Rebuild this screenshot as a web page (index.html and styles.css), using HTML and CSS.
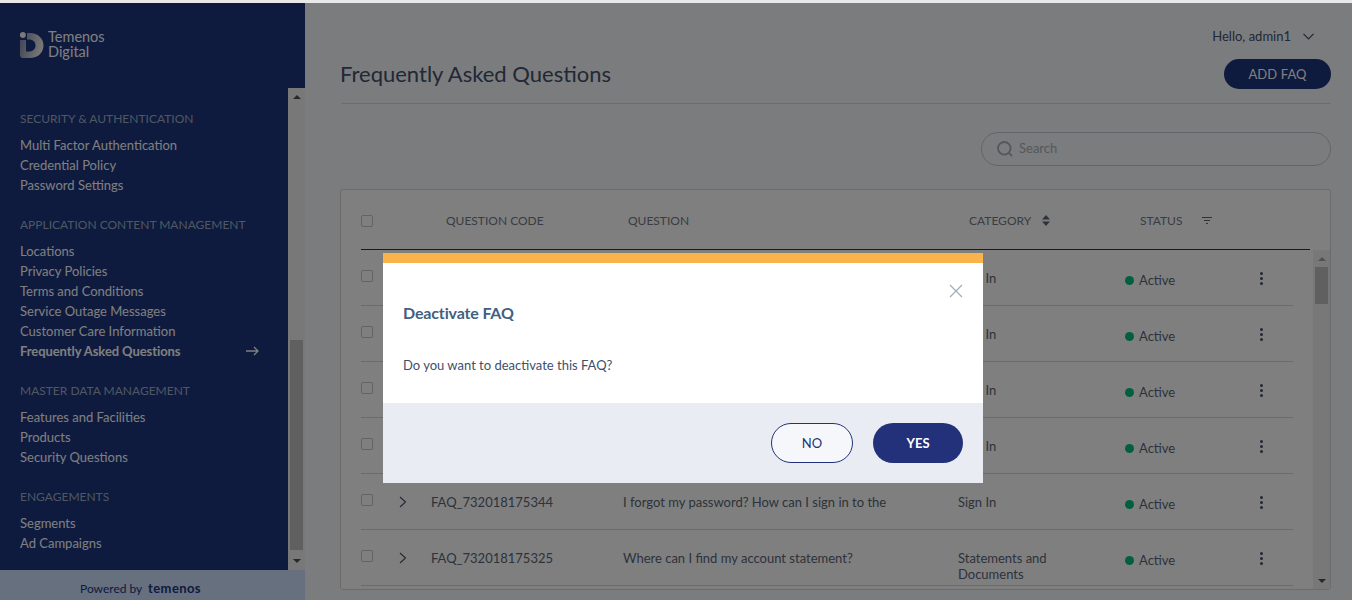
FILE: index.html
```html
<!DOCTYPE html>
<html lang="en">
<head>
<meta charset="UTF-8" />
<title>Frequently Asked Questions</title>
<link rel="stylesheet" href="styles.css">
</head>
<body>

<div class="top-strip"></div>

<div class="shell">
  <!-- Sidebar -->
  <aside class="sidebar">
    <div class="logo">
      <svg class="logo-mark" width="24" height="27" viewBox="0 0 24 27">
        <defs>
          <linearGradient id="logoFade" x1="0" y1="0" x2="1" y2="0.300">
            <stop offset="0" stop-color="#7c86a6" />
            <stop offset="1" stop-color="#eeeeee" />
          </linearGradient>
        </defs>
        <circle cx="2.8" cy="3" r="3" fill="#f4f4f4" />
        <path d="M7 1H10C18 1 23.500 6.500 23.500 13.500C23.500 20.500 18 26 10 26H3C1 26 0 25 0 23V8H6V19.500H9C13 19.500 15.500 17 15.500 13.500C15.500 10 13 7.500 9 7.500H7z" fill="url(#logoFade)" />
      </svg>
      <div class="logo-text">Temenos<br>Digital</div>
    </div>

    <div class="nav-wrap">
      <nav class="nav">
        <h4>Security &amp; Authentication</h4>
        <a>Multi Factor Authentication</a>
        <a>Credential Policy</a>
        <a>Password Settings</a>

        <h4>Application Content Management</h4>
        <a>Locations</a>
        <a>Privacy Policies</a>
        <a>Terms and Conditions</a>
        <a>Service Outage Messages</a>
        <a>Customer Care Information</a>
        <a class="active">Frequently Asked Questions
          <svg width="13" height="10" viewBox="0 0 13 10" fill="none" stroke="#fff" stroke-width="1.300"><path d="M0 5h12M8 1l4 4-4 4" /></svg>
        </a>

        <h4>Master Data Management</h4>
        <a>Features and Facilities</a>
        <a>Products</a>
        <a>Security Questions</a>

        <h4>Engagements</h4>
        <a>Segments</a>
        <a>Ad Campaigns</a>
      </nav>
      <div class="scrollbar side-scroll">
        <span class="arrow-up"></span>
        <span class="thumb"></span>
        <span class="arrow-down"></span>
      </div>
    </div>

    <div class="powered">Powered by <b>temenos</b></div>
  </aside>

  <!-- Contenido -->
  <main class="main">
    <div class="user">
      Hello, admin1
      <svg width="11" height="7" viewBox="0 0 11 7" fill="none" stroke="#44506a" stroke-width="1.200"><path d="M.5.8l5 5 5-5" /></svg>
    </div>

    <div class="title-row">
      <h1>Frequently Asked Questions</h1>
      <button class="btn-add">ADD FAQ</button>
    </div>

    <div class="search">
      <svg width="16" height="16" viewBox="0 0 16 16" fill="none" stroke="#a9b0ba" stroke-width="1.800"><circle cx="7.300" cy="7.300" r="6.300" /><path d="M12 12l3 3" /></svg>
      <span>Search</span>
    </div>

    <section class="card">
      <div class="thead">
        <span class="check"></span>
        <span>QUESTION CODE</span>
        <span>QUESTION</span>
        <span class="with-icon">CATEGORY
          <svg width="8" height="11" viewBox="0 0 8 11" fill="#5d6675"><path d="M4 0l4 4.500H0zM4 11L0 6.500h8z" /></svg>
        </span>
        <span class="with-icon status-head">STATUS
          <svg width="10" height="7" viewBox="0 0 10 7" fill="none" stroke="#5d6675" stroke-width="1"><path d="M0 .5h10M2 3.500h6M4 6.500h2" /></svg>
        </span>
      </div>

      <div class="tbody">
        <div class="rows">
          <div class="row">
            <span class="check"></span>
            <svg class="chev" width="8" height="12" viewBox="0 0 8 12" fill="none" stroke="#44506a" stroke-width="1.100"><path d="M1 1l5.500 5L1 11" /></svg>
            <span>FAQ_732018175401</span>
            <span>How do I sign in to the application?</span>
            <span>Sign In</span>
            <span class="status"><i></i>Active</span>
            <span class="kebab"><i></i><i></i><i></i></span>
          </div>
          <div class="row">
            <span class="check"></span>
            <svg class="chev" width="8" height="12" viewBox="0 0 8 12" fill="none" stroke="#44506a" stroke-width="1.100"><path d="M1 1l5.500 5L1 11" /></svg>
            <span>FAQ_732018175389</span>
            <span>Can I sign in with my fingerprint?</span>
            <span>Sign In</span>
            <span class="status"><i></i>Active</span>
            <span class="kebab"><i></i><i></i><i></i></span>
          </div>
          <div class="row">
            <span class="check"></span>
            <svg class="chev" width="8" height="12" viewBox="0 0 8 12" fill="none" stroke="#44506a" stroke-width="1.100"><path d="M1 1l5.500 5L1 11" /></svg>
            <span>FAQ_732018175372</span>
            <span>Why is my account locked?</span>
            <span>Sign In</span>
            <span class="status"><i></i>Active</span>
            <span class="kebab"><i></i><i></i><i></i></span>
          </div>
          <div class="row">
            <span class="check"></span>
            <svg class="chev" width="8" height="12" viewBox="0 0 8 12" fill="none" stroke="#44506a" stroke-width="1.100"><path d="M1 1l5.500 5L1 11" /></svg>
            <span>FAQ_732018175358</span>
            <span>How do I change my username?</span>
            <span>Sign In</span>
            <span class="status"><i></i>Active</span>
            <span class="kebab"><i></i><i></i><i></i></span>
          </div>
          <div class="row">
            <span class="check"></span>
            <svg class="chev" width="8" height="12" viewBox="0 0 8 12" fill="none" stroke="#44506a" stroke-width="1.100"><path d="M1 1l5.500 5L1 11" /></svg>
            <span>FAQ_732018175344</span>
            <span>I forgot my password? How can I sign in to the</span>
            <span>Sign In</span>
            <span class="status"><i></i>Active</span>
            <span class="kebab"><i></i><i></i><i></i></span>
          </div>
          <div class="row">
            <span class="check"></span>
            <svg class="chev" width="8" height="12" viewBox="0 0 8 12" fill="none" stroke="#44506a" stroke-width="1.100"><path d="M1 1l5.500 5L1 11" /></svg>
            <span>FAQ_732018175325</span>
            <span>Where can I find my account statement?</span>
            <span>Statements and<br>Documents</span>
            <span class="status"><i></i>Active</span>
            <span class="kebab"><i></i><i></i><i></i></span>
          </div>
        </div>
        <div class="scrollbar table-scroll">
          <span class="arrow-up"></span>
          <span class="thumb"></span>
          <span class="arrow-down"></span>
        </div>
      </div>
    </section>
  </main>
</div>

<!-- Modal -->
<div class="overlay">
  <div class="modal" role="dialog" aria-label="Deactivate FAQ">
    <div class="modal-bar"></div>
    <div class="modal-body">
      <svg class="modal-close" width="14" height="14" viewBox="0 0 14 14" fill="none" stroke="#a3aebd" stroke-width="1.300"><path d="M1 1l12 12M13 1L1 13" /></svg>
      <h2>Deactivate FAQ</h2>
      <p>Do you want to deactivate this FAQ?</p>
    </div>
    <div class="modal-foot">
      <button class="btn-no">NO</button>
      <button class="btn-yes">YES</button>
    </div>
  </div>
</div>

</body>
</html>
```

FILE: styles.css
```css
/* Reset */
* {
  margin: 0; padding: 0; box-sizing: border-box;
}
body, html {
  height: 100%;
  background: #f7f8fc;
  font-family: 'Lato', sans-serif;
  color: #44506a;
  overflow: hidden;
}
body {
  position: relative;
}
.top-strip {
  height: 3px;
  background: #e9e9e9;
}
.shell {
  display: flex;
  height: 597px;
}

/* Sidebar */
.sidebar {
  width: 305px;
  flex: none;
  display: flex;
  flex-direction: column;
  background: #1c347c;
}
.logo {
  height: 85px;
  flex: none;
  display: flex;
  padding: 29px 0 0 20px;
}
.logo-mark {
  flex: none;
}
.logo-text {
  margin-left: 4px;
  margin-top: -3px;
  font-size: 14.5px;
  line-height: 15px;
  color: #fff;
}
.nav-wrap {
  flex: 1;
  display: flex;
  min-height: 0;
}
.nav {
  flex: 1;
  padding: 21px 29px 0 20px;
  overflow: hidden;
}
.nav h4 {
  font-size: 12px;
  line-height: 20px;
  font-weight: 400;
  text-transform: uppercase;
  color: #9fb0c4;
  margin: 20px 0 6px;
}
.nav h4:first-child {
  margin-top: 0;
}
.nav a {
  display: flex;
  justify-content: space-between;
  align-items: center;
  font-size: 13px;
  line-height: 20px;
  color: #fff;
}
.nav a.active {
  font-weight: 700;
  letter-spacing: -.08px;
}
.powered {
  height: 30px;
  flex: none;
  padding: 10px 0 0 80px;
  background: #cde0ff;
  font-size: 12px;
  line-height: 16px;
  color: #1c347c;
}
.powered b {
  margin-left: 3px;
  font-size: 13px;
  letter-spacing: .4px;
}

/* Scrollbars */
.scrollbar {
  width: 17px;
  flex: none;
  display: flex;
  flex-direction: column;
  align-items: center;
  background: #f1f1f1;
}
.scrollbar .thumb {
  width: 13px;
  background: #c1c1c1;
}
.arrow-up, .arrow-down {
  width: 0; height: 0;
  border-left: 4px solid transparent;
  border-right: 4px solid transparent;
}
.arrow-up {
  border-bottom: 4px solid #505050;
  margin-top: 7px;
}
.arrow-down {
  border-top: 4px solid #505050;
  margin-top: auto;
  margin-bottom: 7px;
}
.side-scroll .thumb {
  height: 210px;
  margin-top: 241px;
}
.table-scroll .thumb {
  height: 37px;
  margin-top: 6px;
}
.table-scroll .arrow-up {
  border-bottom-color: #a3a3a3;
}

/* Contenido */
.main {
  flex: 1;
  min-width: 0;
  padding: 0 21px 0 36px;
  overflow: hidden;
}
.user {
  display: flex;
  justify-content: flex-end;
  align-items: center;
  gap: 12px;
  padding: 23px 17px 0 0;
  font-size: 13px;
  line-height: 20px;
}
.title-row {
  display: flex;
  justify-content: space-between;
  align-items: center;
  margin-top: 13px;
  padding-bottom: 14px;
  border-bottom: 1px solid #d7dae0;
}
h1 {
  font-size: 22px;
  line-height: 30px;
  font-weight: 400;
  margin-left: -1px;
}
.btn-add {
  width: 107px;
  height: 30px;
  border: none;
  border-radius: 15px;
  background: #1c347c;
  color: #fff;
  font-family: inherit;
  font-size: 13px;
  letter-spacing: .1px;
}
.search {
  display: flex;
  align-items: center;
  gap: 6px;
  width: 350px;
  height: 34px;
  margin: 28px 0 0 auto;
  padding-left: 15px;
  border: 1px solid #c6cad1;
  border-radius: 17px;
  font-size: 13px;
  color: #a9b0ba;
}
.search span {
  padding-bottom: 2px;
}

/* Tabla */
.card {
  height: 401px;
  margin: 23px 0 0 -1px;
  padding-left: 20px;
  border: 1px solid #d7d7d9;
  border-radius: 3px;
  background: #fff;
  overflow: hidden;
}
.thead {
  display: grid;
  grid-template-columns: 85px 182px 341px 171px 1fr;
  align-items: center;
  height: 60px;
  margin-right: 20px;
  padding-top: 2px;
  border-bottom: 1px solid #30343c;
  font-size: 12px;
  color: #727a88;
}
.with-icon {
  display: flex;
  align-items: center;
  gap: 11px;
}
.status-head {
  gap: 20px;
}
.check {
  display: block;
  width: 12px;
  height: 12px;
  border: 1px solid #c3c6cc;
  border-radius: 2px;
  background: #fff;
}
.tbody {
  display: flex;
  height: 340px;
}
.rows {
  width: 932px;
  margin-right: 20px;
  flex: none;
  overflow: hidden;
}
.row {
  display: grid;
  grid-template-columns: 38px 32px 192px 335px 167px 136px 1fr;
  height: 56px;
  padding-top: 20px;
  border-bottom: 1px solid #d7d7d9;
  font-size: 13px;
  line-height: 16px;
  color: #5a6675;
}
.chev {
  margin-top: 2px;
}
.status {
  display: flex;
  align-items: center;
  height: 16px;
  margin-top: 2px;
}
.status i {
  width: 9px;
  height: 9px;
  margin-right: 5px;
  border-radius: 50%;
  background: #00bf7f;
}
.kebab {
  display: flex;
  flex-direction: column;
  gap: 2px;
  margin: 1.5px 0 0 -1.5px;
}
.kebab i {
  width: 3px;
  height: 3px;
  border-radius: 50%;
  background: #44506a;
}

/* Modal */
.overlay {
  position: absolute;
  top: 3px; left: 0; right: 0; bottom: 0;
  padding: 250px 0 0 383px;
  background: rgba(0, 0, 0, 0.5);
}
.modal {
  width: 600px;
  height: 230px;
  display: flex;
  flex-direction: column;
  background: #fff;
}
.modal-bar {
  height: 10px;
  flex: none;
  background: #f9b34a;
}
.modal-body {
  position: relative;
  flex: 1;
  padding: 40px 20px 0;
}
.modal-close {
  position: absolute;
  top: 21px; right: 20px;
}
.modal-body h2 {
  font-size: 16px;
  line-height: 20px;
  font-weight: 700;
  letter-spacing: -.15px;
  color: #41607f;
}
.modal-body p {
  margin-top: 32px;
  font-size: 13px;
  line-height: 20px;
  color: #41506a;
}
.modal-foot {
  height: 80px;
  flex: none;
  display: flex;
  justify-content: flex-end;
  align-items: center;
  gap: 20px;
  padding-right: 20px;
  background: #e9edf3;
}
.modal-foot button {
  height: 40px;
  border-radius: 20px;
  font-family: inherit;
  font-size: 13px;
}
.btn-no {
  width: 82px;
  border: 1px solid #22317a;
  background: #f6f7fb;
  color: #22317a;
}
.btn-yes {
  width: 90px;
  border: none;
  background: #22317a;
  color: #fff;
  font-weight: 700;
}
```
